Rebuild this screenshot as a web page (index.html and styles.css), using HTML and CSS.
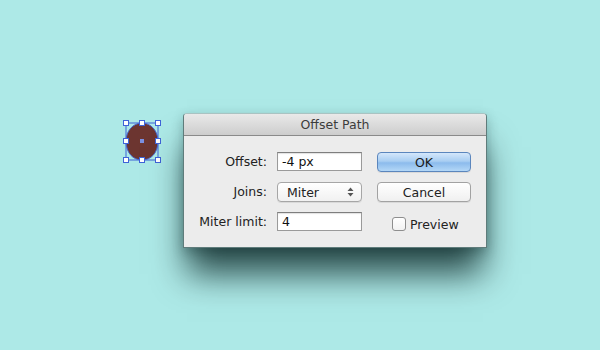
FILE: index.html
```html
<!DOCTYPE html>
<html lang="en">
<head>
    <meta charset="UTF-8">
    <title>Offset Path</title>
    <link rel="stylesheet" href="styles.css">
</head>
<body>
    <div class="canvas">
        <svg class="shape" xmlns="http://www.w3.org/2000/svg" width="40" height="44" viewBox="0 0 40 44">
            <path d="M20,3 C29,3 36,11 36,21 C36,33 29,40 20,40 C11,40 4,33 4,21 C4,11 11,3 20,3 Z" fill="#6c3530" stroke="#4a63c8" stroke-width="1"/>
            <rect x="4" y="3" width="32" height="37" fill="none" stroke="#3f63d8" stroke-width="1"/>
            <g fill="#fff" stroke="#3f63d8" stroke-width="1">
                <rect x="1.5" y="0.5" width="5" height="5"/>
                <rect x="17.5" y="0.5" width="5" height="5"/>
                <rect x="33.5" y="0.5" width="5" height="5"/>
                <rect x="1.5" y="18.5" width="5" height="5"/>
                <rect x="33.5" y="18.5" width="5" height="5"/>
                <rect x="1.5" y="37.5" width="5" height="5"/>
                <rect x="17.5" y="37.5" width="5" height="5"/>
                <rect x="33.5" y="37.5" width="5" height="5"/>
            </g>
            <rect x="18" y="19" width="4" height="4" fill="#7a8fe0"/>
        </svg>

        <div class="dialog">
            <div class="titlebar">Offset Path</div>
            <div class="dialog-body">
                <label class="field-label">Offset:</label>
                <div class="text-input">-4 px</div>
                <button class="btn btn-default">OK</button>

                <label class="field-label">Joins:</label>
                <div class="popup">
                    <span>Miter</span>
                    <svg class="popup-arrows" width="7" height="10" viewBox="0 0 7 10">
                        <path d="M3.5,0.5 L6.5,4 L0.5,4 Z M3.5,9.5 L6.5,6 L0.5,6 Z" fill="#555"/>
                    </svg>
                </div>
                <button class="btn">Cancel</button>

                <label class="field-label">Miter limit:</label>
                <div class="text-input">4</div>
                <label class="check">
                    <span class="check-box"></span>
                    Preview
                </label>
            </div>
        </div>
    </div>
</body>
</html>
```

FILE: styles.css
```css
body, html {
    margin: 0;
    padding: 0;
    height: 100%;
    overflow: hidden;
    background: #ade9e7;
    font-family: "Lucida Grande", "DejaVu Sans", sans-serif;
}
.canvas {
    position: relative;
    width: 600px;
    height: 350px;
}
.shape {
    position: absolute;
    left: 122px;
    top: 120px;
}
.dialog {
    position: absolute;
    left: 183px;
    top: 113px;
    width: 304px;
    height: 135px;
    box-sizing: border-box;
    background: #ececec;
    border: 1px solid #5f7c7b;
    border-top-color: #a9c3c2;
    border-radius: 4px 4px 0 0;
    box-shadow: 0 30px 32px -4px rgba(0, 25, 25, 0.75), 0 4px 12px rgba(20, 60, 60, 0.3);
}
.titlebar {
    height: 21px;
    line-height: 21px;
    text-align: center;
    font-size: 12.5px;
    color: #3c3c3c;
    background: linear-gradient(#e9e9e9, #cdcdcd);
    border-bottom: 1px solid #8a8a8a;
    border-radius: 3px 3px 0 0;
}
.dialog-body {
    display: grid;
    grid-template-columns: 71px 85px 99px;
    grid-auto-rows: 20px;
    column-gap: 10px;
    row-gap: 10px;
    padding: 16px 0 0 12px;
}
.dialog-body > :nth-child(3n) {
    margin-left: 5px;
}
.field-label {
    text-align: right;
    font-size: 12.5px;
    line-height: 20px;
    color: #222;
    white-space: nowrap;
}
.text-input {
    height: 19px;
    box-sizing: border-box;
    background: #fff;
    border: 1px solid #9a9a9a;
    border-top-color: #7e7e7e;
    box-shadow: inset 0 1px 1px rgba(0, 0, 0, 0.12);
    padding: 0 4px;
    font-size: 12.5px;
    line-height: 17px;
    color: #111;
}
.popup {
    display: flex;
    align-items: center;
    justify-content: space-between;
    height: 20px;
    box-sizing: border-box;
    padding: 0 7px 0 9px;
    background: linear-gradient(#ffffff, #f1f1f1);
    border: 1px solid #a6a6a6;
    border-radius: 4px;
    box-shadow: 0 1px 0 rgba(0, 0, 0, 0.08);
    font-size: 12.5px;
    color: #222;
}
.btn {
    height: 20px;
    margin: 0;
    padding: 0;
    border: 1px solid #a2a2a2;
    border-radius: 4px;
    background: linear-gradient(#ffffff, #f0f0f0);
    box-shadow: 0 1px 0 rgba(0, 0, 0, 0.08);
    font-family: inherit;
    font-size: 12.5px;
    color: #222;
}
.btn-default {
    border-color: #5b86bd;
    background: linear-gradient(#d4e7fb 0%, #a9cef2 45%, #8cbbec 55%, #b3d7f7 100%);
    color: #1a1a1a;
}
.check {
    display: flex;
    align-items: center;
    gap: 4px;
    padding-left: 15px;
    margin-top: 4px;
    font-size: 12.5px;
    color: #222;
}
.check-box {
    width: 12px;
    height: 12px;
    border: 1px solid #8e8e8e;
    border-radius: 3px;
    background: linear-gradient(#ffffff, #f2f2f2);
}
```
